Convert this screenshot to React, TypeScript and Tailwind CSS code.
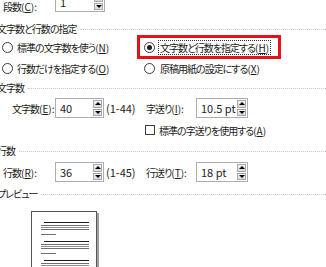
import type { ReactNode } from 'react';

function Spinner() {
  return (
    <div className="flex w-[10px] flex-col gap-[1px] py-[1px] pr-[1px]">
      <div className="flex flex-1 items-center justify-center border border-[#a8a8a8] bg-gradient-to-b from-[#f4f4f4] to-[#dadada]">
        <div className="h-0 w-0 border-x-[3px] border-b-[3px] border-x-transparent border-b-black" />
      </div>
      <div className="flex flex-1 items-center justify-center border border-[#a8a8a8] bg-gradient-to-b from-[#f4f4f4] to-[#dadada]">
        <div className="h-0 w-0 border-x-[3px] border-t-[3px] border-x-transparent border-t-black" />
      </div>
    </div>
  );
}

function SpinBox({ value, className }: { value: string; className: string }) {
  return (
    <div className={`flex h-[20px] shrink-0 border border-[#abadb3] bg-white ${className}`}>
      <span className="flex-1 whitespace-nowrap pl-[4px] text-[11px] leading-[18px] tracking-normal text-[#1b1b1b]">{value}</span>
      <Spinner />
    </div>
  );
}

function Heading({ children }: { children: ReactNode }) {
  return (
    <div className="-ml-[3px] flex h-[14px] items-center">
      <span className="whitespace-nowrap leading-[14px]">{children}</span>
      <div className="ml-[4px] flex-1 border-t border-dotted border-[#c9c9c9]" />
    </div>
  );
}

function Radio({ checked = false }: { checked?: boolean }) {
  return (
    <span className="flex h-[11px] w-[11px] shrink-0 items-center justify-center rounded-full border border-[#3c3c3c] bg-white">
      {checked && <span className="h-[5px] w-[5px] rounded-full bg-[#1b1b1b]" />}
    </span>
  );
}

function Key({ k, colon = false }: { k: string; colon?: boolean }) {
  return (
    <span className="tracking-normal">
      (<u className="underline-offset-1">{k}</u>){colon && ':'}
    </span>
  );
}

function Lines() {
  return (
    <div className="flex flex-col">
      <div className="ml-[12px] h-[1px] w-[45px] bg-[#202020]" />
      <div className="ml-[9px] mt-[2px] h-[1px] w-[48px] bg-[#707070]" />
      <div className="ml-[9px] mt-[1px] h-[1px] w-[48px] bg-[#909090]" />
      <div className="ml-[9px] mt-[1px] h-[1px] w-[48px] bg-[#707070]" />
      <div className="ml-[9px] mt-[4px] h-[1px] w-[15px] bg-[#707070]" />
    </div>
  );
}

export default function App() {
  return (
    <div
      className="relative flex h-[267px] w-[326px] flex-col overflow-hidden whitespace-nowrap bg-white text-[10px] tracking-[-1px] text-[#1b1b1b] [font-feature-settings:'palt']"
      style={{ fontFamily: '"Noto Sans CJK JP", "Noto Sans", sans-serif' }}
    >
      {/* 段数 */}
      <div className="-mt-[8px] flex h-[20px] items-center">
        <span className="w-[55px] shrink-0 pl-[3px] pt-[8px]">
          段数<Key k="C" colon />
        </span>
        <SpinBox value="1" className="w-[50px]" />
      </div>

      <div className="mt-[10px]">
        <Heading>文字数と行数の指定</Heading>
      </div>

      <div className="mt-[3px] grid grid-cols-[143px_1fr] gap-y-[5px]">
        <div className="flex h-[16px] items-center gap-[4px] pl-[2px]">
          <Radio />
          <span>
            標準の文字数を使う<Key k="N" />
          </span>
        </div>
        <div className="flex h-[16px] items-center gap-[3px] pl-[1px]">
          <Radio checked />
          <span className="border border-dotted border-[#333] px-[1px] leading-[13px]">
            文字数と行数を指定する<Key k="H" />
          </span>
        </div>
        <div className="flex h-[16px] items-center gap-[4px] pl-[2px]">
          <Radio />
          <span>
            行数だけを指定する<Key k="O" />
          </span>
        </div>
        <div className="flex h-[16px] items-center gap-[4px] pl-[1px]">
          <Radio />
          <span className="pl-[1px]">
            原稿用紙の設定にする<Key k="X" />
          </span>
        </div>
      </div>

      <div className="mt-[5px]">
        <Heading>文字数</Heading>
      </div>

      <div className="mt-[3px] flex h-[20px] items-center">
        <span className="w-[55px] shrink-0 pl-[12px]">
          文字数<Key k="E" colon />
        </span>
        <SpinBox value="40" className="w-[49px]" />
        <span className="ml-[2px] w-[40px] shrink-0 text-[11px] tracking-normal">(1-44)</span>
        <span className="w-[50px] shrink-0">
          字送り<Key k="I" colon />
        </span>
        <SpinBox value="10.5 pt" className="w-[52px]" />
      </div>

      <div className="mt-[5px] flex h-[14px] items-center gap-[4px] pl-[145px]">
        <span className="h-[10px] w-[10px] shrink-0 border border-[#3c3c3c] bg-white" />
        <span>
          標準の字送りを使用する<Key k="A" />
        </span>
      </div>

      <div className="mt-[7px]">
        <Heading>行数</Heading>
      </div>

      <div className="mt-[4px] flex h-[20px] items-center">
        <span className="w-[55px] shrink-0 pl-[3px]">
          行数<Key k="R" colon />
        </span>
        <SpinBox value="36" className="w-[49px]" />
        <span className="ml-[2px] w-[40px] shrink-0 text-[11px] tracking-normal">(1-45)</span>
        <span className="w-[50px] shrink-0">
          行送り<Key k="T" colon />
        </span>
        <SpinBox value="18 pt" className="w-[52px]" />
      </div>

      <div className="mt-[5px]">
        <Heading>プレビュー</Heading>
      </div>

      <div className="ml-[31px] mt-[10px] flex h-[70px] w-[66px] shrink-0 flex-col gap-[6px] border border-[#555] bg-white pt-[10px] shadow-[2px_2px_0_#a0a0a0]">
        <Lines />
        <Lines />
        <Lines />
      </div>

      {/* red highlight annotation */}
      <div className="pointer-events-none absolute left-[137px] top-[35px] h-[24px] w-[144px] border-[3px] border-[#e5121b]" />
    </div>
  );
}
